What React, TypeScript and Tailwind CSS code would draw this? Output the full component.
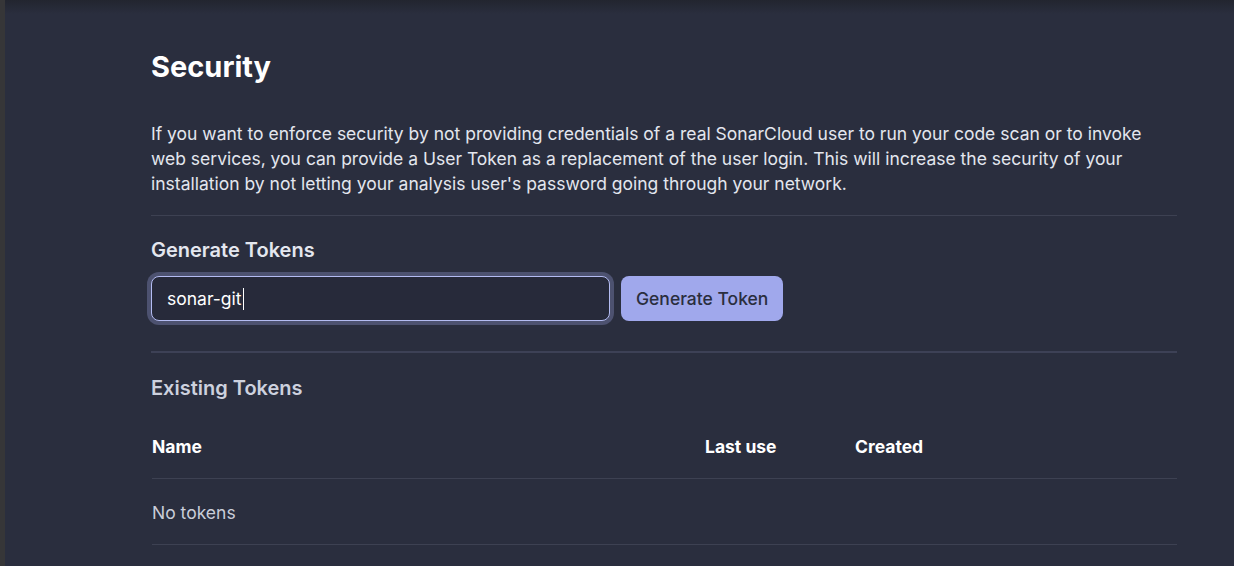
const columns = [
  { field: "name", header: "Name", width: "w-[553px]" },
  { field: "lastUse", header: "Last use", width: "w-[150px]" },
  { field: "created", header: "Created", width: "" },
];

const App: React.FC = () => {
  return (
    <div className="flex min-h-[566px] w-full bg-[#2a2e3e] font-['Inter',sans-serif]">
      <div className="w-[5px] shrink-0 bg-[#363638]" />
      <div className="relative flex-1">
        <div className="absolute inset-x-0 top-0 h-[14px] bg-gradient-to-b from-[#22252f] to-transparent" />
        <div className="ml-[146px] w-[1026px] pt-[49px]">
          <h1 className="text-[29px] leading-[36px] font-bold text-white">Security</h1>

          <p className="mt-[36px] text-[17.5px] leading-[25px] text-[#e3e6ee]">
            If you want to enforce security by not providing credentials of a real SonarCloud user to run your code scan or to invoke web services, you can provide a User Token as a replacement of the user login. This will increase the security of your installation by not letting your analysis user's password going through your network.
          </p>

          <div className="mt-[19px] h-px w-full bg-[#3d4152]" />

          <h2 className="mt-[20px] text-[20px] leading-[28px] font-semibold text-[#e4e7ef]">
            Generate Tokens
          </h2>

          <div className="mt-[12px] flex items-center gap-[11px]">
            <div className="flex h-[45px] w-[459px] items-center rounded-[8px] border border-[#b4bcf2] bg-[#272a3a] px-[15px] pt-px ring-4 ring-[#4d5270]">
              <span className="text-[17.5px] text-white">sonar-git</span>
              <span className="ml-px h-[22px] w-px bg-white" />
            </div>
            <button className="h-[45px] rounded-[8px] bg-[#a0a8ec] px-[15px] pt-[2px] text-[17.5px] font-medium text-[#2a2e3e]">
              Generate Token
            </button>
          </div>

          <div className="mt-[30px] h-[2px] w-full bg-[#3d4156]" />

          <h2 className="mt-[21px] text-[20px] leading-[28px] font-semibold text-[#cdd1de]">
            Existing Tokens
          </h2>

          <table className="mt-[12px] ml-px w-[1025px] border-collapse text-left">
            <thead>
              <tr className="h-[64px] border-b border-[#3d4152]">
                {columns.map((col, i) => (
                  <th key={i} className={`${col.width} p-0 pt-[3px] text-[17.5px] font-bold text-white`}>
                    {col.header}
                  </th>
                ))}
              </tr>
            </thead>
            <tbody>
              <tr className="h-[66px] border-b border-[#3d4152]">
                <td colSpan={3} className="p-0 pt-[4px] text-[17.5px] text-[#c9cdd9]">
                  No tokens
                </td>
              </tr>
            </tbody>
          </table>
        </div>
      </div>
    </div>
  );
};

export default App;
